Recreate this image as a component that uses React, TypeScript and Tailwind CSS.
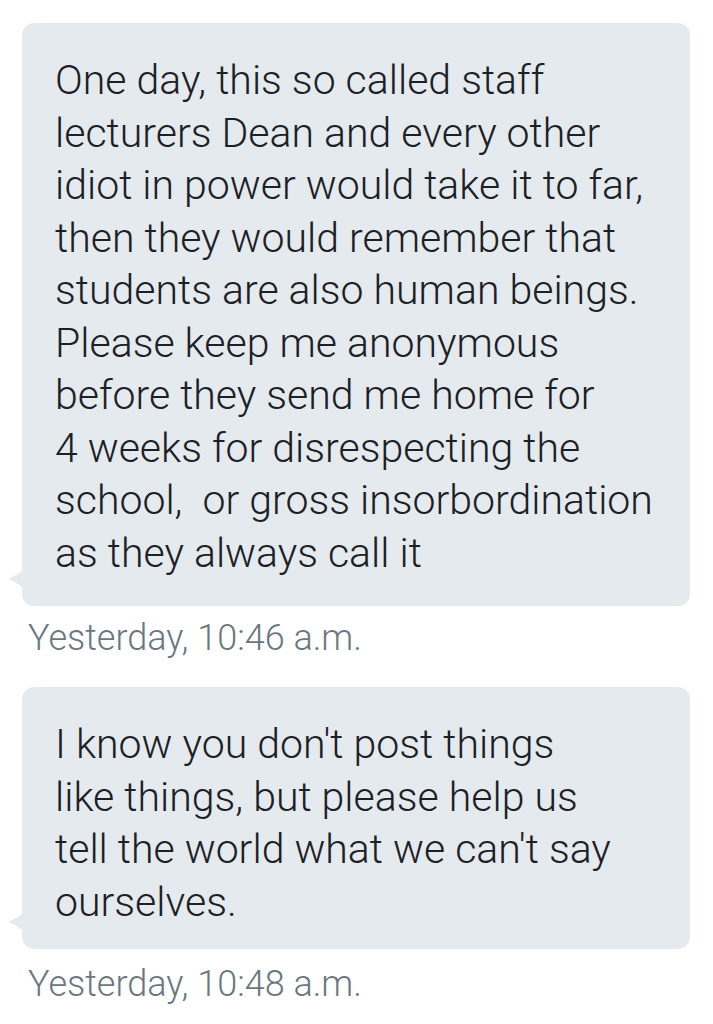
const messages = [
  {
    lines: [
      "One day, this so called staff",
      "lecturers Dean and every other",
      "idiot in power would take it to far,",
      "then they would remember that",
      "students are also human beings.",
      "Please keep me anonymous",
      "before they send me home for",
      "4 weeks for disrespecting the",
      "school,  or gross insorbordination",
      "as they always call it",
    ],
    time: "Yesterday, 10:46 a.m.",
    bubble: "pb-[27px]",
    stamp: "pt-[12px] pb-[29px]",
  },
  {
    lines: [
      "I know you don't post things",
      "like things, but please help us",
      "tell the world what we can't say",
      "ourselves.",
    ],
    time: "Yesterday, 10:48 a.m.",
    bubble: "pb-[21px]",
    stamp: "pt-[15px] pb-[20px]",
  },
];

function Tail() {
  return (
    <svg
      className="absolute -left-[13px] bottom-[18px]"
      width="14"
      height="18"
      viewBox="0 0 14 18"
    >
      <path d="M14 0 L14 18 C10 14 5 11 1 10 C0 9.5 0 8.5 1 8 C6 6 11 3 14 0 Z" fill="#e5eaee" />
    </svg>
  );
}

export default function App() {
  return (
    <div
      className="min-h-screen bg-white pt-[23px] px-[22px]"
      style={{ fontFamily: "Roboto, 'Noto Sans', sans-serif" }}
    >
      <div className="flex flex-col w-[668px]">
        {messages.map((m, i) => (
          <div key={i} className="flex flex-col">
            <div className={`relative rounded-[12px] bg-[#e5eaee] pl-[33px] pt-[31px] ${m.bubble}`}>
              {m.lines.map((l, j) => (
                <div
                  key={j}
                  className="whitespace-pre text-[41px] leading-[52.5px] font-light text-[#1c2126]"
                >
                  {l}
                </div>
              ))}
              <Tail />
            </div>
            <div className={`pl-[6px] text-[36px] leading-[40px] font-light text-[#6b7780] ${m.stamp}`}>
              {m.time}
            </div>
          </div>
        ))}
      </div>
    </div>
  );
}
